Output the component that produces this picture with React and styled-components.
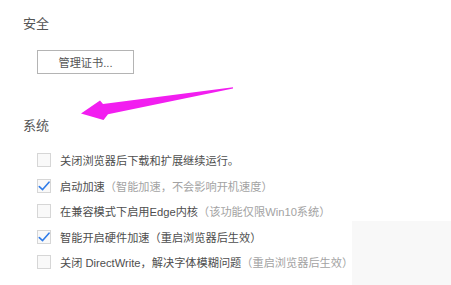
import React from "react";
import styled, { createGlobalStyle } from "styled-components";

const Global = createGlobalStyle`
  html, body { margin: 0; padding: 0; background: #ffffff; }
  body { font-family: "Liberation Sans", "Noto Sans CJK SC", sans-serif; }
`;

const Page = styled.div`
  position: relative;
  width: 451px;
  height: 285px;
  overflow: hidden;
  box-sizing: border-box;
  padding: 17px 0 0 23px;
  display: flex;
  flex-direction: column;
  align-items: flex-start;
`;

const Heading = styled.div`
  font-size: 13px;
  line-height: 13px;
  height: 13px;
  color: #555555;
  margin-top: ${(p) => p.$top || 0}px;
`;

const Button = styled.button`
  margin: 20px 0 0 14px;
  width: 97px;
  height: 24px;
  box-sizing: border-box;
  border: 1px solid #b4b4b4;
  background: #ffffff;
  color: #555555;
  font-family: inherit;
  font-size: 11.2px;
  padding: 0;
  display: flex;
  align-items: center;
  justify-content: center;
`;

const List = styled.div`
  margin: 15.5px 0 0 14px;
  display: flex;
  flex-direction: column;
`;

const Row = styled.div`
  height: 25.5px;
  display: flex;
  align-items: center;
  gap: 9px;
  white-space: nowrap;
`;

const Box = styled.span`
  width: 14px;
  height: 14px;
  box-sizing: border-box;
  border: 1px solid #d6d6d6;
  background: #f9f9f9;
  display: flex;
  align-items: center;
  justify-content: center;
  flex: none;
`;

const Label = styled.span`
  font-size: 11.2px;
  color: #4e4e4e;
`;

const Note = styled.span`
  color: ${(p) => (p.$dark ? "#4e4e4e" : "#a3a3a3")};
`;

const Haze = styled.div`
  position: absolute;
  left: 352px;
  top: 221px;
  right: 0;
  bottom: 0;
  background: rgba(246, 246, 246, 0.82);
`;

const ArrowLayer = styled.svg`
  position: absolute;
  left: 0;
  top: 0;
  pointer-events: none;
`;

const Check = () => (
  <svg width="12" height="12" viewBox="0 0 12 12">
    <path d="M1.3 6.6 L4.6 9.6 L11 2.2" fill="none" stroke="#2f7be8" strokeWidth="1.6" strokeLinecap="round" strokeLinejoin="round" />
  </svg>
);

const rows = [
  { checked: false, text: "关闭浏览器后下载和扩展继续运行。" },
  { checked: true, text: "启动加速", note: "（智能加速，不会影响开机速度）" },
  { checked: false, text: "在兼容模式下启用Edge内核", note: "（该功能仅限Win10系统）" },
  { checked: true, text: "智能开启硬件加速", note: "（重启浏览器后生效）", dark: true },
  { checked: false, text: "关闭 DirectWrite，解决字体模糊问题", note: "（重启浏览器后生效）" },
];

export default function App() {
  return (
    <>
      <Global />
      <Page>
        <Heading>安全</Heading>
        <Button>管理证书...</Button>
        <Heading $top={45}>系统</Heading>
        <List>
          {rows.map((r, i) => (
            <Row key={i}>
              <Box>{r.checked && <Check />}</Box>
              <Label>
                {r.text}
                {r.note && <Note $dark={r.dark}>{r.note}</Note>}
              </Label>
            </Row>
          ))}
        </List>
        <Haze />
        <ArrowLayer width="451" height="285" viewBox="0 0 451 285">
          <polygon
            points="81,113.5 100,100.5 103,104 233,87.3 233,88.5 108,114.3 103.5,120"
            fill="#f21ef0"
          />
        </ArrowLayer>
      </Page>
    </>
  );
}
